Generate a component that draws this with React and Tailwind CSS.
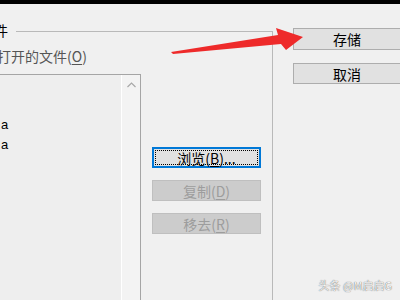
import React from 'react';

const font = "font-['Microsoft_YaHei','Noto_Sans_CJK_SC',sans-serif]";

const Btn = ({ children, disabled = false, className = '' }) => (
  <div
    className={`flex h-[21px] shrink-0 items-center justify-center border text-[14px] leading-none ${
      disabled ? 'border-[#bfbfbf] bg-[#cccccc] text-[#9d9d9d]' : 'border-[#adadad] bg-[#e1e1e1] text-black'
    } ${className}`}
  >
    {children}
  </div>
);

const U = ({ children }) => <span className="underline underline-offset-[2px]">{children}</span>;

export default function App() {
  return (
    <div className={`relative h-[300px] w-[400px] overflow-hidden bg-[#f0f0f0] ${font}`}>
      <div className="h-[4px] bg-black" />

      <div className="flex">
        {/* group box, left edge is off-screen */}
        <div className="relative mt-[27px] flex h-[269px] w-[273px] shrink-0 border-t border-r border-[#b9b9b9]">
          <span className="absolute -left-[6px] -top-[11px] bg-[#f0f0f0] pr-[8px] text-[14px] leading-[18px] text-black">
            件
          </span>

          <div className="flex w-[141px] shrink-0 flex-col">
            <div className="mt-[15px] -ml-[3px] text-[14px] leading-[18px] text-[#555]">
              打开的文件(<U>O</U>)
            </div>
            <div className="mt-[9px] flex flex-1 border-t border-r border-[#a5a5a5] bg-[#eeeeee]">
              <div className="flex-1 pt-[40px] pl-[1px] text-[13px] leading-[20px] text-black font-['Liberation_Sans',sans-serif]">
                <div>a</div>
                <div>a</div>
              </div>
              <div className="flex w-[19px] justify-center border-l border-white bg-[#f3f3f3] pt-[7px]">
                <svg width="9" height="6" viewBox="0 0 9 6">
                  <path d="M0.5 5 L4.5 1 L8.5 5" fill="none" stroke="#a8a8a8" strokeWidth="1.2" />
                </svg>
              </div>
            </div>
          </div>

          <div className="ml-[11px] mt-[115px] flex w-[109px] shrink-0 flex-col gap-[12px]">
            <div className="flex h-[21px] items-center justify-center border-2 border-[#0078d7] bg-[#e1e1e1] p-[1px]">
              <div className="flex h-full w-full items-center justify-center border border-dotted border-black text-[14px] leading-none text-black">
                浏览(<U>B</U>)...
              </div>
            </div>
            <Btn disabled>
              复制(<U>D</U>)
            </Btn>
            <Btn disabled>
              移去(<U>R</U>)
            </Btn>
          </div>
        </div>

        <div className="ml-[20px] mt-[24px] flex w-[108px] shrink-0 flex-col gap-[13px]">
          <Btn className="h-[22px]">存储</Btn>
          <Btn>取消</Btn>
        </div>
      </div>

      {/* red annotation arrow */}
      <svg className="absolute inset-0" width="400" height="300" viewBox="0 0 400 300">
        <polygon
          points="171,52 278,35 276,28 303,37 286,50 281,44 173,54"
          fill="#ee2a2a"
        />
      </svg>

      <div className="absolute bottom-[9px] right-[8px] text-[11px] leading-none text-[#f6f6f6] [text-shadow:0_0_1px_rgba(0,0,0,0.8)]">
        头条 @M启启G
      </div>
    </div>
  );
}
